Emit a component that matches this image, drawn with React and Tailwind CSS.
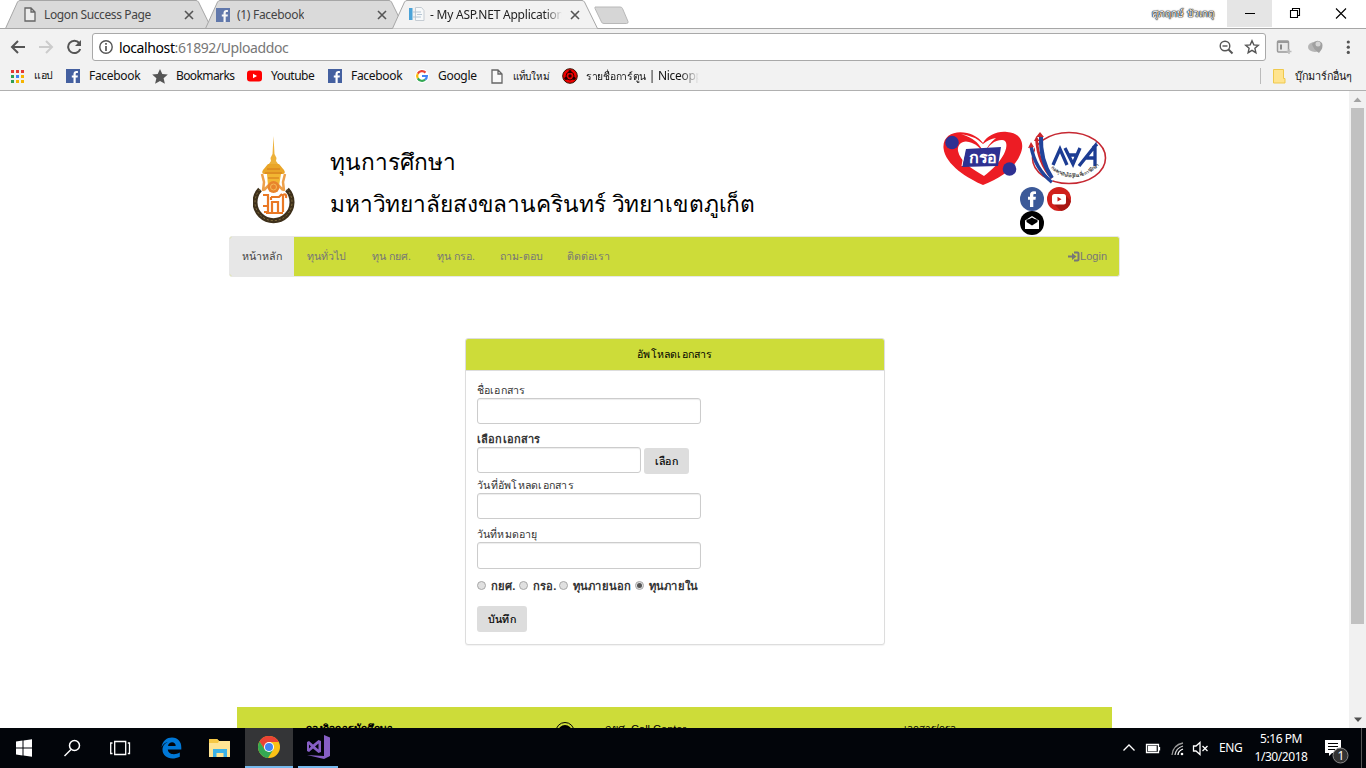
import React from "react";

const ui = "font-['Noto_Sans','Liberation_Sans',sans-serif]";

function Tab({ className, width, active, icon, title, titleClass }) {
  const d = `M0.5 28.5 L12.5 2 Q13.5 0.5 15 0.5 H${width - 16} Q${width - 14.5} 0.5 ${width - 13.5} 2 L${width - 0.5} 28.5`;
  return (
    <div className={`relative h-[29px] shrink-0 ${className}`}>
      <svg className="absolute inset-0" width={width} height="29" fill="none">
        <path d={d} fill={active ? "#f2f2f2" : "#dadada"} stroke="#a6a6a6" />
        {!active && <path d={`M0 28.5H${width}`} stroke="#a6a6a6" />}
      </svg>
      <div className="relative flex h-[29px] items-center">
        {icon}
        <span className={`overflow-hidden whitespace-nowrap text-[12px] leading-4 ${titleClass}`}>{title}</span>
        <svg className="absolute right-[18px] top-[10px]" width="10" height="10" stroke="#555" strokeWidth="1.6">
          <path d="M1 1l8 8M9 1l-8 8" />
        </svg>
      </div>
    </div>
  );
}

function PageIcon({ className = "" }) {
  return (
    <svg className={`shrink-0 ${className}`} width="12" height="15" viewBox="0 0 12 15" fill="#fff" fillOpacity=".5" stroke="#666" strokeWidth="1.3">
      <path d="M1 1h6l4 4v9H1z M7 1v4h4" />
    </svg>
  );
}

function FacebookIcon({ className = "" }) {
  return (
    <svg className={`shrink-0 ${className}`} width="14" height="14" viewBox="0 0 14 14">
      <path fill="#4460a0" d="M0 0h14v14H0z" />
      <path fill="#fff" d="M7.500 14V8.600H5.800V6.500h1.700V5c0-2 1.200-3 2.900-3l1.500.1v2h-1c-1 0-1.200.5-1.200 1.100v1.300h2.200l-.3 2.100H9.700V14z" />
    </svg>
  );
}

function GoogleIcon() {
  return (
    <svg className="shrink-0" width="14" height="14" viewBox="0 0 14 14">
      <circle cx="7" cy="7" r="7" fill="#fff" />
      <g fill="none" strokeWidth="2.200">
        <path stroke="#ea4335" d="M2.800 4.600A4.900 4.900 0 0 1 10.500 3.600" />
        <path stroke="#fbbc05" d="M2.800 4.600a4.900 4.900 0 0 0 0 4.800" />
        <path stroke="#34a853" d="M2.800 9.400a4.900 4.900 0 0 0 7.300 1.300" />
        <path stroke="#4285f4" d="M10.100 10.700A4.600 4.600 0 0 0 11.900 7H7" />
      </g>
    </svg>
  );
}

function Bookmark({ icon, label, width, gap = "gap-[9px]", text = "" }) {
  return (
    <div className={`flex h-[20px] shrink-0 items-center ${gap} ${width}`}>
      {icon}
      <span className={`whitespace-nowrap ${text}`}>{label}</span>
    </div>
  );
}

const appColors = ["#e53935", "#e53935", "#e53935", "#2e9e54", "#3b82f6", "#f5b400", "#2e9e54", "#f5b400", "#f5b400"];

function BrowserChrome() {
  return (
    <header className={`relative h-[91px] shrink-0 bg-[#f2f2f2] ${ui}`}>
      <div className="flex h-[29px] border-b border-[#a6a6a6] bg-white">
        <Tab
          className="ml-[5px] w-[207px]"
          width={207}
          icon={<PageIcon className="ml-[19px]" />}
          title="Logon Success Page"
          titleClass="ml-[8px] text-[#444] tracking-[-0.38px]"
        />
        <Tab
          className="-ml-[7px] w-[200px]"
          width={200}
          icon={<FacebookIcon className="ml-[11px] opacity-80" />}
          title="(1) Facebook"
          titleClass="ml-[7px] text-[#444] tracking-[-0.3px]"
        />
        <Tab
          className="-ml-[13px] w-[206px]"
          width={206}
          active
          icon={
            <svg className="ml-[17px] shrink-0" width="16" height="15">
              <path fill="#4ba3d8" d="M0 1h3.500v12H0z" />
              <path fill="#f7f9fa" stroke="#c5ccd3" d="M6.500.5h6l2.500 3v10H6.500z" />
              <path stroke="#b4c5d4" d="M4 5h8M8 7.500h5M4 10h8" />
            </svg>
          }
          title="- My ASP.NET Application"
          titleClass="ml-[5px] w-[133px] text-[#222] tracking-[-0.22px] [mask-image:linear-gradient(to_right,black_115px,transparent_132px)]"
        />
        <svg className="-ml-[4px] mt-[6px]" width="36" height="19">
          <path d="M1 1h25q2 0 2.500 1.500L34 15.500q.5 2-1.500 2H10q-2 0-2.500-1.500L1 2.500z" fill="#d6d6d6" stroke="#b8b8b8" />
        </svg>
        <div className="ml-auto flex h-[27px] items-center">
          <span className="mr-[12px] w-[63px] whitespace-nowrap text-[10px] text-white [text-shadow:0_0_1px_#000,0_0_1px_#000,0_0_1px_#222,0_0_2px_#777]">
            ศุภฤกษ์ บัวเกตุ
          </span>
          <div className="flex h-[27px] w-[45px] items-center justify-center bg-[#e5e5e5]">
            <div className="h-px w-[10px] bg-black" />
          </div>
          <svg width="94" height="27" fill="none" stroke="#000" strokeWidth="1.100">
            <path d="M18.500 10.500h7v7h-7zM20.500 10.500v-2h7v7h-2" />
            <path d="M64 8.500l10 10M74 8.500l-10 10" />
          </svg>
        </div>
      </div>

      <div className="flex h-[36px] items-center">
        <svg className="mr-[11px] shrink-0" width="81" height="28" fill="none" strokeWidth="2">
          <path stroke="#555" d="M25 14H12M18 8l-6 6 6 6" />
          <path stroke="#ccc" d="M39 14h13M46 8l6 6-6 6" />
          <path stroke="#555" d="M79.200 10a6.200 6.200 0 1 0 1 6" />
          <path fill="#555" d="M81 7v6h-6z" />
        </svg>
        <div className="flex h-[28px] w-[1174px] shrink-0 items-center rounded-[3px] border border-[#a9a9a9] bg-white pl-[6px] pr-[5px]">
          <svg width="14" height="14" fill="none" stroke="#555" strokeWidth="1.400">
            <circle cx="7" cy="7" r="6.200" />
            <path d="M7 6v5M7 3v1.700" strokeWidth="1.700" />
          </svg>
          <span className="ml-[6px] text-[14px] tracking-[-0.4px] text-black">
            localhost<span className="text-[#777]">:61892/Uploaddoc</span>
          </span>
          <svg className="ml-auto" width="42" height="16" fill="none" stroke="#555" strokeWidth="1.400">
            <circle cx="7" cy="7" r="4.800" />
            <path d="M4.500 7h5" />
            <path d="M10.500 10.500L14.500 14.500" strokeWidth="2" />
            <path d="M34 1.800l1.800 4.100 4.500.4-3.400 3 1 4.400-3.900-2.300-3.900 2.300 1-4.400-3.400-3 4.500-.4z" />
          </svg>
        </div>
        <svg className="ml-[9px]" width="86" height="28">
          <rect x="2.500" y="8" width="11" height="11" rx="1" fill="#e8e8e8" stroke="#999" strokeWidth="1.500" />
          <path d="M3 9h10" stroke="#999" strokeWidth="2" />
          <path d="M6 11.500v5" stroke="#888" strokeWidth="2" />
          <path d="M11.500 18.500h5M14 16v5" stroke="#bbb" strokeWidth="1.500" />
          <ellipse cx="40" cy="14" rx="7" ry="5" fill="#b5b5b5" />
          <path d="M37 11q5-6 10-1 2 4-3 10-6-4-7-9z" fill="#a0a0a0" />
          <circle cx="43" cy="11" r="2.500" fill="#d5d5d5" />
          <g fill="#555">
            <circle cx="73.300" cy="9" r="1.600" />
            <circle cx="73.300" cy="14.200" r="1.600" />
            <circle cx="73.300" cy="19.400" r="1.600" />
          </g>
        </svg>
      </div>

      <div className="flex h-[22px] items-center pl-[10px] text-[12px] tracking-[-0.3px] text-[#111]">
        <Bookmark
          width="w-[56px]"
          text="text-[10.500px]"
          icon={
            <div className="grid w-[14px] shrink-0 grid-cols-[3px_3px_3px] gap-[2px] pl-px">
              {appColors.map((color, i) => (
                <span key={i} className="h-[3px] w-[3px]" style={{ backgroundColor: color }} />
              ))}
            </div>
          }
          gap="gap-[10px]"
          label="แอป"
        />
        <Bookmark width="w-[86px]" icon={<FacebookIcon />} label="Facebook" />
        <Bookmark
          width="w-[95px]"
          icon={
            <svg className="shrink-0" width="16" height="15" viewBox="0 0 16 15" fill="#555">
              <path d="M8 0l2.300 5.100 5.500.5-4.200 3.700 1.300 5.500L8 11.900l-4.900 2.900 1.300-5.500L.2 5.600l5.500-.5z" />
            </svg>
          }
          gap="gap-[8px]"
          text="tracking-[-0.6px]"
          label="Bookmarks"
        />
        <Bookmark
          width="w-[81px]"
          icon={
            <svg className="shrink-0" width="15" height="12">
              <rect width="15" height="11" y=".5" rx="3" fill="#f00" />
              <path fill="#fff" d="M6 3.700v4.600L10 6z" />
            </svg>
          }
          text="tracking-[-0.5px]"
          label="Youtube"
        />
        <Bookmark width="w-[87px]" icon={<FacebookIcon />} label="Facebook" />
        <Bookmark width="w-[76px]" icon={<GoogleIcon />} label="Google" />
        <Bookmark width="w-[71px]" icon={<PageIcon />} gap="gap-[10px]" label="แท็บใหม่" text="text-[10px]" />
        <Bookmark
          width="w-[136px]"
          gap="gap-[8px]"
          icon={
            <svg className="shrink-0" width="16" height="16">
              <circle cx="8" cy="8" r="7.300" fill="#e00" stroke="#310" />
              <circle cx="8" cy="8" r="4" fill="none" stroke="#300" />
              <circle cx="8" cy="8" r="1.700" fill="#200" />
              <circle cx="8" cy="3.700" r="1.600" fill="#200" />
              <circle cx="4" cy="10.300" r="1.600" fill="#200" />
              <circle cx="12" cy="10.300" r="1.600" fill="#200" />
            </svg>
          }
          label={<><span className="text-[10.3px]">รายชื่อการ์ตูน</span> | Niceopp</>}
          text="w-[114px] [mask-image:linear-gradient(to_right,black_94px,transparent_113px)]"
        />
        <div className="ml-auto flex items-center border-l border-[#bbb] pl-[12px]">
          <svg width="13" height="15">
            <path d="M.5.500h10v9h1.500v4.500H.5z" fill="#ffe48f" stroke="#efc94c" />
          </svg>
          <span className="ml-[9px] w-[71px] whitespace-nowrap text-[10.8px]">บุ๊กมาร์กอื่นๆ</span>
        </div>
      </div>
      <div className="mt-[3px] h-px bg-[#b0b0b0]" />
    </header>
  );
}

function UniversityEmblem() {
  return (
    <svg className="shrink-0" width="42" height="90" viewBox="0 0 42 90" fill="none">
      <path d="M20.500 0l1 18 2 4-.5 3 3.500 5h-12l3.500-5-.5-3 2-4z" fill="#edb13a" />
      <path d="M15 28h11l5 6q2 3-1 4H11q-3-1-1-4z" fill="#e9a528" />
      <path d="M14 38h14l-2 12q-6 4-11 0z" fill="#f2b632" />
      <path d="M9 38l2 8-1 9M32 38l-2 8 1 9M11 54l5-5M30 54l-5-5" stroke="#eda04a" strokeWidth="2.500" />
      <circle cx="20.500" cy="51" r="6" fill="#e8842c" />
      <circle cx="20.500" cy="51" r="3" stroke="#f6bb55" />
      <path d="M14 33h13M12 37h17M15 42h11" stroke="#d4791a" strokeWidth="1" />
      <path d="M7 53.500a18.500 18.500 0 1 0 27 0" stroke="#3e301b" strokeWidth="5" />
      <path d="M7 53.500a18.500 18.500 0 1 0 27 0" stroke="#8a7443" strokeWidth="1" strokeDasharray="2 2" />
      <path d="M10 59h5v11h-5M15 70v6h-4M19 76V66h6v10M18 61h8l3-3M18 61v3M30 76V59q4-2 3 3M13 77h17" stroke="#e97824" strokeWidth="2.200" />
    </svg>
  );
}

function LoanLogos() {
  return (
    <svg width="164" height="55" viewBox="0 0 164 55">
      <path d="M40 54C26 48 2 34 .5 17-.5 4 12-1 24 2c8 2 13 6 16 10 5-8 14-12 24-11 15 1 18 13 13 23C71 38 56 48 40 54z" fill="#ed1c24" />
      <path d="M41 45C29 38 17 30 15 20c-1-7 5-11 11-9 7 2 11 5 15 12 5-9 10-14 18-14 5 0 6 6 2 14-5 9-12 16-20 22z" fill="#fff" />
      <path d="M18 3q18 5 23 20 4-10 12-16-7 1-13 6-8-8-22-10z" fill="#fff" />
      <path d="M23 18l35-2-3 19-36 1z" fill="#2e3192" />
      <path d="M22 17l-3 18" stroke="#fff" strokeWidth="1" />
      <text x="26" y="31.500" fontSize="15" fontWeight="700" textLength="28" lengthAdjust="spacingAndGlyphs" fill="#fff">กรอ</text>
      <circle cx="9" cy="11.500" r="6.800" fill="#2e3192" />
      <circle cx="66.500" cy="38" r="6.800" fill="#2e3192" />
      <ellipse cx="126" cy="27" rx="36.500" ry="25.500" fill="#fff" stroke="#c62832" strokeWidth="1.600" />
      <path d="M88 15Q92 38 109 51" stroke="#21449b" strokeWidth="3.500" fill="none" />
      <path d="M92 12Q94 34 110 49" stroke="#fff" strokeWidth="2" fill="none" />
      <path d="M93.500 8Q95 32 109 47" stroke="#c9252c" strokeWidth="2.800" fill="none" />
      <path d="M98 5q-1 24 11 42" stroke="#21449b" strokeWidth="4" fill="none" />
      <path d="M85 17l3-6 3 5zM91 10l2.500-5 3 5zM93 6l4-5 4 5z" fill="#c9252c" />
      <g fill="none" stroke="#1c3c93" strokeWidth="3.300">
        <path d="M110 34l7-16 7 16" />
        <path d="M122 17l8 16 7-16M125 24h10" />
        <path d="M136 35l16-20v20M142 27h10M150 17l4-4" />
      </g>
      <path id="loanArc" d="M108 37Q131 57 158 33" fill="none" />
      <text fontSize="4.500" fontWeight="700" fill="#444">
        <textPath href="#loanArc" textLength="54">กองทุนเงินให้กู้ยืมเพื่อการศึกษา</textPath>
      </text>
    </svg>
  );
}

function SocialIcons() {
  return (
    <svg width="52" height="48">
      <circle cx="12" cy="12" r="12" fill="#3b5998" />
      <path fill="#fff" d="M10 20v-7.200H8v-3h2V8C10 5.500 11.500 4.300 14 4.300l2 .1v2.700h-1.200c-1.200 0-1.500.5-1.500 1.300v1.400h2.600l-.4 3h-2.200V20z" />
      <circle cx="39" cy="12" r="12" fill="#d0201c" />
      <path d="M45 8l6 6a12 12 0 0 1-10 10l-8-8z" fill="#a81713" />
      <rect x="32" y="7" width="14" height="10.500" rx="2.500" fill="#fff" />
      <path d="M37.500 9.800v4.800L41.500 12.200z" fill="#c71d19" />
      <circle cx="12" cy="36" r="12" fill="#000" />
      <path d="M5 33.500L12 29l7 4.500V42H5z" fill="#fff" />
      <path d="M6.500 32.500h11v2.500L12 38.500 6.500 35z" fill="#000" />
      <path d="M7.500 33L12 30.500l4.500 2.500v1.500H7.500z" fill="#000" />
    </svg>
  );
}

const navItems = [
  { label: "หน้าหลัก", width: "w-[64px]", pad: "pl-[12px]", active: true },
  { label: "ทุนทั่วไป", width: "w-[65px]", pad: "pl-[13px]" },
  { label: "ทุน กยศ.", width: "w-[65px]", pad: "pl-[13px]" },
  { label: "ทุน กรอ.", width: "w-[63px]", pad: "pl-[13px]" },
  { label: "ถาม-ตอบ", width: "w-[67px]", pad: "pl-[13px]" },
  { label: "ติดต่อเรา", width: "w-[66px]", pad: "pl-[13px]" },
];

function Field({ className }) {
  return <input className={`block rounded-[3px] border border-[#ccc] bg-white shadow-[inset_0_1px_1px_rgba(0,0,0,0.075)] ${className}`} />;
}

function Radio({ checked, label, className }) {
  return (
    <label className={`flex items-center whitespace-nowrap ${className}`}>
      <span className="mr-[4.500px] flex h-[9px] w-[9px] shrink-0 -translate-y-px items-center justify-center rounded-full border border-[#a8a8a8] bg-[#e0e0e0]">
        {checked && <span className="h-[5px] w-[5px] rounded-full bg-[#555]" />}
      </span>
      {label}
    </label>
  );
}

function WebPage() {
  return (
    <main className="flex h-[637px] overflow-hidden bg-white font-['Liberation_Sans',sans-serif]">
      <div className="w-[1349px] shrink-0">
        <div className="flex h-[145px] pl-[253px] pt-[40px]">
          <div className="pt-[5px]"><UniversityEmblem /></div>
          <div className="ml-[35px] whitespace-nowrap text-[22.7px] leading-[42px] text-black">
            <div className="mt-[10px]">ทุนการศึกษา</div>
            <div className="tracking-[-0.13px]">มหาวิทยาลัยสงขลานครินทร์ วิทยาเขตภูเก็ต</div>
          </div>
          <div className="ml-auto mr-[242px] w-[164px]">
            <LoanLogos />
            <div className="ml-[77px] mt-px"><SocialIcons /></div>
          </div>
        </div>

        <nav className="ml-[229px] flex h-[41px] w-[891px] overflow-hidden rounded-[3px] border border-[#e7e7e7] bg-[#cddc39] text-[10.7px] text-[#777]">
          {navItems.map((item) => (
            <a
              key={item.label}
              className={`flex shrink-0 items-center whitespace-nowrap ${item.pad} ${item.width} ${item.active ? "bg-[#e7e7e7] text-[#444]" : ""}`}
            >
              {item.label}
            </a>
          ))}
          <a className="ml-auto mr-[12px] flex items-center text-[11px]">
            <svg width="12" height="11" fill="none" stroke="#777" strokeWidth="2">
              <path d="M0 5.500h5M6 1.500h3.500q1 0 1 1v6q0 1-1 1H6" />
              <path d="M4 2l4.500 3.500L4 9z" fill="#777" stroke="none" />
            </svg>
            Login
          </a>
        </nav>

        <section className="ml-[465px] mt-[61px] h-[307px] w-[420px] rounded-[3px] border border-[#ddd] bg-white text-[10.600px] tracking-[0.15px] text-[#333] shadow-[0_1px_1px_rgba(0,0,0,0.05)]">
          <h3 className="flex h-[32px] items-center justify-center rounded-t-[2px] border-b border-[#ddd] bg-[#cddc39] tracking-[0.2px] text-black">อัพโหลดเอกสาร</h3>
          <form className="pl-[11px] leading-[16px]">
            <div className="mt-[11px] h-[16px]">ชื่อเอกสาร</div>
            <Field className="h-[26px] w-[224px]" />
            <div className="mt-[7px] h-[16px] text-[11px] font-bold">เลือกเอกสาร</div>
            <div className="flex h-[26px] gap-[3px]">
              <Field className="h-[26px] w-[164px]" />
              <button type="button" className="mt-px h-[26px] w-[45px] rounded-[3px] bg-[#ddd] text-[10.600px] text-black [-webkit-text-stroke:0.2px_black]">เลือก</button>
            </div>
            <div className="mt-[4px] h-[16px] tracking-[0.25px]">วันที่อัพโหลดเอกสาร</div>
            <Field className="h-[26px] w-[224px]" />
            <div className="mt-[7px] h-[16px]">วันที่หมดอายุ</div>
            <Field className="h-[27px] w-[224px]" />
            <div className="mt-[9px] flex h-[16px] text-[11.200px] font-bold tracking-[0.25px]">
              <Radio className="w-[42px]" label="กยศ." />
              <Radio className="w-[40px]" label="กรอ." />
              <Radio className="w-[76px]" label="ทุนภายนอก" />
              <Radio className="w-[70px]" label="ทุนภายใน" checked />
            </div>
            <button type="button" className="mt-[12px] block h-[26px] w-[50px] rounded-[3px] bg-[#ddd] text-[10.600px] text-black [-webkit-text-stroke:0.2px_black]">บันทึก</button>
          </form>
        </section>

        <footer className="ml-[237px] mt-[62px] flex h-[100px] w-[875px] bg-[#cddc39] pt-[14px] text-[11px] leading-[16px] text-black">
          <div className="w-[249px] whitespace-nowrap pl-[69px] text-[10.4px] font-bold tracking-[0.1px]">กองกิจการนักศึกษา</div>
          <div className="w-[119px] pl-[69px]">
            <svg width="20" height="20">
              <circle cx="10" cy="10.500" r="9" fill="none" stroke="#000" />
              <circle cx="10" cy="11" r="7" fill="#000" />
            </svg>
          </div>
          <div className="w-[299px] whitespace-nowrap">กยศ. Call Center</div>
          <div className="whitespace-nowrap text-[10px]">เอกสาร/กรอ</div>
        </footer>
      </div>

      <div className="flex w-[17px] flex-col items-center bg-[#f1f1f1]">
        <svg width="17" height="17"><path fill="#a3a3a3" d="M4.500 11h8l-4-4.500z" /></svg>
        <div className="h-[516px] w-[13px] bg-[#c1c1c1]" />
        <svg className="mt-auto" width="17" height="17"><path fill="#505050" d="M5 6.500h8l-4 4.500z" /></svg>
      </div>
    </main>
  );
}

function Taskbar() {
  return (
    <footer className={`flex h-[40px] bg-[#02050a] text-[12px] text-white ${ui}`}>
      <svg className="shrink-0" width="245" height="40">
        <path fill="#fff" d="M16 13.500l6.500-1v7H16zM23.500 12.400L32 11.200v8.300h-8.500zM16 20.500h6.500v7L16 26.500zM23.500 20.500H32v8.300l-8.500-1.200z" />
        <g fill="none" stroke="#fff" strokeWidth="1.500">
          <circle cx="74.500" cy="17.500" r="5" />
          <path d="M71 21.500L64.500 28" />
          <path d="M114.700 13.500h11v13h-11zM112.500 15H110.700v10.500h1.800M127.800 15h1.700v10.500h-1.700" strokeWidth="1.300" />
        </g>
        <path fill="#0078d7" d="M161.500 19.500C162.500 12.500 167 9.500 172 9.500c6 0 9.500 4.500 9.300 10v2h-13.500c.3 5 7 6 12 3v4.300c-9 4.200-17.300.4-17.300-7 0-4 2.500-6.800 6-8-3.500.5-6 3-7 5.700zm6.500-1.600h7.700c0-5-7-5-7.700 0z" />
        <path d="M209 11h8l2 2h11v16h-21z" fill="#ffe594" />
        <path d="M209 11h8l2 2-1 2h-9z" fill="#f6c845" />
        <path d="M213 21h14v8h-3.500v-4h-7v4H213z" fill="#3bb3e8" />
      </svg>
      <div className="flex h-[40px] w-[48px] shrink-0 items-center justify-center border-b-2 border-[#76b9ed] bg-[#343537]">
        <svg width="22" height="22" viewBox="-11 -11 22 22">
          <circle r="11" fill="#fbc116" />
          <path d="M0-5H9.800A11 11 0 0 0-9.500-5.500L-4.300 2.500z" fill="#ea4335" />
          <path d="M-9.500-5.500A11 11 0 0 0-1 11L4.300 2.500-4.300 2.500z" fill="#34a853" />
          <circle r="5" fill="#fff" />
          <circle r="4" fill="#4285f4" />
        </svg>
      </div>
      <div className="ml-[5px] flex h-[40px] w-[40px] shrink-0 items-center justify-center border-b-2 border-[#76b9ed]">
        <svg width="24" height="24" fill="#865fc5">
          <path d="M18 0l6 2.500V21l-6 3-17-4 17 1z" />
          <path fillRule="evenodd" d="M1 7L3 6l4 3.500L12.500 5 15 6v11l-2.500 1L7 13.500 3 17 1 16zM3 9.500v4l2-2zM12.500 8.500L9 11.500l3.500 3z" />
        </svg>
      </div>
      <svg className="ml-auto shrink-0" width="90" height="40" fill="none" stroke="#fff" strokeWidth="1.300">
        <path d="M4.500 22.500L10 17l5.500 5.500" />
        <path d="M27.500 16.500h12v8h-12zM40.500 19v3.500" />
        <path d="M29.500 18.500h7.500v4h-7.500z" fill="#fff" />
        <g stroke="#999">
          <path d="M53 27q1-10 11-12" />
          <path d="M56 27q1-7 8-9" stroke="#ccc" />
          <path d="M59 27q0-4 5-6" stroke="#fff" />
        </g>
        <circle cx="63" cy="26" r="1.300" fill="#fff" stroke="none" />
        <path d="M74.500 18h2.500l4-3.500v12L77 23h-2.500z" />
        <path d="M83.500 18l5 5M88.500 18l-5 5" />
      </svg>
      <span className="ml-[10px] w-[26px] leading-[40px] tracking-[-0.4px]">ENG</span>
      <div className="ml-[3px] w-[66px] whitespace-nowrap pt-[2px] text-center leading-[18px] tracking-[-0.45px]">
        <div>5:16 PM</div>
        <div>1/30/2018</div>
      </div>
      <svg className="ml-[8px] shrink-0" width="44" height="40">
        <path fill="#fff" d="M3 12h16v13H10l-3 3v-3H3z" />
        <path stroke="#000" d="M6 15.500h10M6 18.500h10M6 21.500h7" />
        <circle cx="18.500" cy="27.500" r="7.500" fill="#333" stroke="#888" />
        <text x="15.500" y="32" fontSize="12" fill="#fff">1</text>
        <path stroke="#555" d="M39.500 0v40" />
      </svg>
    </footer>
  );
}

export default function App() {
  return (
    <div className="flex h-[768px] w-[1366px] flex-col overflow-hidden bg-white">
      <BrowserChrome />
      <WebPage />
      <Taskbar />
    </div>
  );
}
